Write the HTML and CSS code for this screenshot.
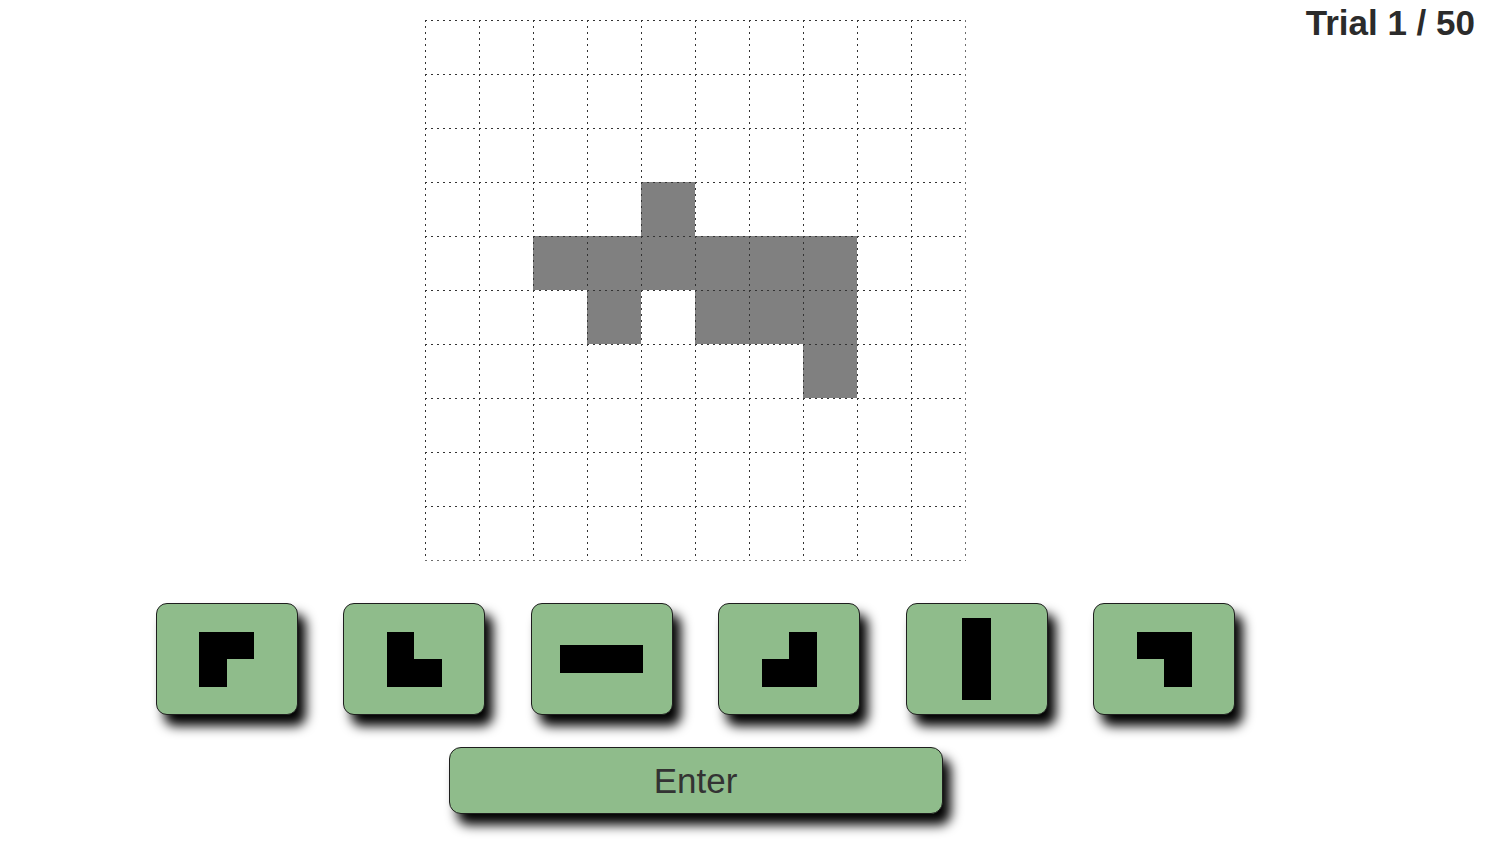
FILE: index.html
```html
<!DOCTYPE html>
<html lang="en">
<head>
<meta charset="utf-8">
<title>Trial</title>
<link rel="stylesheet" href="styles.css">
</head>
<body>
<div class="page">
  <main class="main">
    <div class="board">
      <div class="cell"></div><div class="cell"></div><div class="cell"></div><div class="cell"></div><div class="cell"></div><div class="cell"></div><div class="cell"></div><div class="cell"></div><div class="cell"></div><div class="cell"></div>
      <div class="cell"></div><div class="cell"></div><div class="cell"></div><div class="cell"></div><div class="cell"></div><div class="cell"></div><div class="cell"></div><div class="cell"></div><div class="cell"></div><div class="cell"></div>
      <div class="cell"></div><div class="cell"></div><div class="cell"></div><div class="cell"></div><div class="cell"></div><div class="cell"></div><div class="cell"></div><div class="cell"></div><div class="cell"></div><div class="cell"></div>
      <div class="cell"></div><div class="cell"></div><div class="cell"></div><div class="cell"></div><div class="cell filled"></div><div class="cell"></div><div class="cell"></div><div class="cell"></div><div class="cell"></div><div class="cell"></div>
      <div class="cell"></div><div class="cell"></div><div class="cell filled"></div><div class="cell filled"></div><div class="cell filled"></div><div class="cell filled"></div><div class="cell filled"></div><div class="cell filled"></div><div class="cell"></div><div class="cell"></div>
      <div class="cell"></div><div class="cell"></div><div class="cell"></div><div class="cell filled"></div><div class="cell"></div><div class="cell filled"></div><div class="cell filled"></div><div class="cell filled"></div><div class="cell"></div><div class="cell"></div>
      <div class="cell"></div><div class="cell"></div><div class="cell"></div><div class="cell"></div><div class="cell"></div><div class="cell"></div><div class="cell"></div><div class="cell filled"></div><div class="cell"></div><div class="cell"></div>
      <div class="cell"></div><div class="cell"></div><div class="cell"></div><div class="cell"></div><div class="cell"></div><div class="cell"></div><div class="cell"></div><div class="cell"></div><div class="cell"></div><div class="cell"></div>
      <div class="cell"></div><div class="cell"></div><div class="cell"></div><div class="cell"></div><div class="cell"></div><div class="cell"></div><div class="cell"></div><div class="cell"></div><div class="cell"></div><div class="cell"></div>
      <div class="cell"></div><div class="cell"></div><div class="cell"></div><div class="cell"></div><div class="cell"></div><div class="cell"></div><div class="cell"></div><div class="cell"></div><div class="cell"></div><div class="cell"></div>
    </div>

    <div class="choices">
      <button class="choice" type="button">
        <span class="piece piece-2x2"><i class="on"></i><i class="on"></i><i class="on"></i><i></i></span>
      </button>
      <button class="choice" type="button">
        <span class="piece piece-2x2"><i class="on"></i><i></i><i class="on"></i><i class="on"></i></span>
      </button>
      <button class="choice" type="button">
        <span class="piece piece-3x1"><i class="on"></i><i class="on"></i><i class="on"></i></span>
      </button>
      <button class="choice" type="button">
        <span class="piece piece-2x2"><i></i><i class="on"></i><i class="on"></i><i class="on"></i></span>
      </button>
      <button class="choice" type="button">
        <span class="piece piece-1x3"><i class="on"></i><i class="on"></i><i class="on"></i></span>
      </button>
      <button class="choice" type="button">
        <span class="piece piece-2x2"><i class="on"></i><i class="on"></i><i></i><i class="on"></i></span>
      </button>
    </div>

    <button class="enter" type="button">Enter</button>
  </main>

  <div class="trial">Trial 1 / 50</div>
</div>
</body>
</html>
```

FILE: styles.css
```css
html, body {
  margin: 0;
  padding: 0;
  background: #ffffff;
}

body {
  font-family: "Liberation Sans", Arial, sans-serif;
  color: #333333;
}

.page {
  display: grid;
  grid-template-columns: 1fr;
  min-height: 845px;
}

.main {
  grid-area: 1 / 1;
  justify-self: start;
  width: 1391px;
  padding-top: 20px;
  display: flex;
  flex-direction: column;
  align-items: center;
}

.trial {
  grid-area: 1 / 1;
  justify-self: end;
  align-self: start;
  padding: 3px 16px 0 0;
  font-size: 35px;
  line-height: 40px;
  font-weight: bold;
  color: #2b2b2b;
}

/* ---------- board ---------- */
.board {
  --dot: #333333;
  --edge: #6e6e6e;
  display: grid;
  grid-template-columns: repeat(10, 54px);
  grid-auto-rows: 54px;
  padding: 0 1px 1px 0;
  background-image:
    repeating-linear-gradient(to bottom, var(--edge) 0 2px, transparent 2px 6px),
    repeating-linear-gradient(to right, var(--edge) 0 2px, transparent 2px 6px);
  background-size: 1px 100%, 100% 1px;
  background-position: right top, left bottom;
  background-repeat: no-repeat;
}

.cell {
  background-image:
    repeating-linear-gradient(to right, var(--dot) 0 2px, transparent 2px 6px),
    repeating-linear-gradient(to bottom, var(--dot) 0 2px, transparent 2px 6px);
  background-size: 100% 1px, 1px 100%;
  background-position: left top, left top;
  background-repeat: no-repeat;
}

.filled {
  background-color: #808080;
}

/* ---------- choices ---------- */
.choices {
  display: flex;
  gap: 45.6px;
  margin-top: 42px;
}

.choice {
  box-sizing: border-box;
  width: 142px;
  height: 112px;
  padding: 0;
  margin: 0;
  display: flex;
  align-items: center;
  justify-content: center;
  background: #8fbc8b;
  border: 1px solid #1e1e1e;
  border-radius: 11px;
  box-shadow: 8px 11px 12px #000000;
  cursor: pointer;
}

.piece {
  display: grid;
  grid-auto-rows: 27.5px;
}

.piece-2x2 {
  grid-template-columns: repeat(2, 27.5px);
}

.piece-3x1 {
  grid-template-columns: repeat(3, 27.5px);
}

.piece-1x3 {
  grid-template-columns: 29px;
}

.piece i {
  display: block;
}

.piece .on {
  background: #000000;
}

/* ---------- enter ---------- */
.enter {
  box-sizing: border-box;
  width: 494px;
  height: 67px;
  margin-top: 32px;
  padding: 0;
  background: #8fbc8b;
  border: 1px solid #1e1e1e;
  border-radius: 12px;
  box-shadow: 8px 11px 12px #000000;
  font-family: "Liberation Sans", Arial, sans-serif;
  font-size: 35px;
  color: #333333;
  cursor: pointer;
}
```
